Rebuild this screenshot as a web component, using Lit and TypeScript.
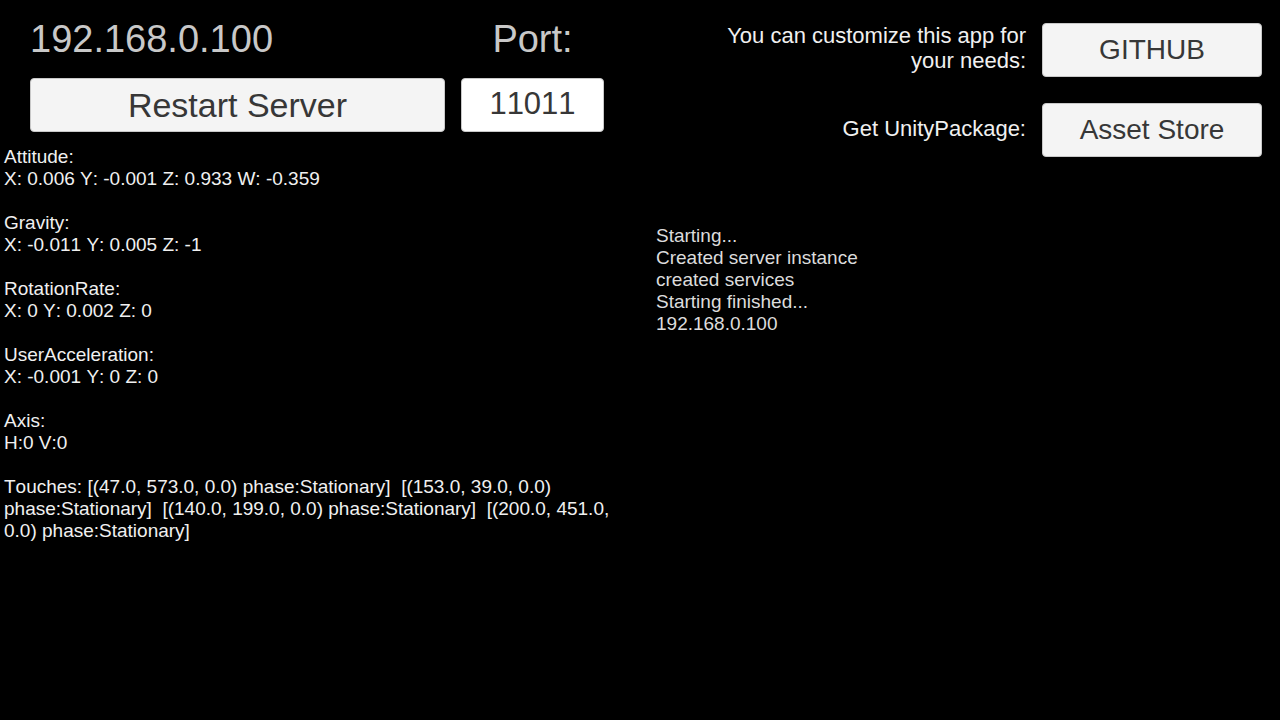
import { LitElement, html, css } from "lit";
import { customElement, state } from "lit/decorators.js";

interface Reading {
  name: string;
  value: string;
}

@customElement("app-root")
export class AppRoot extends LitElement {
  static styles = css`
    :host {
      display: block;
      min-height: 100vh;
      background: #000;
      color: #f0f0f0;
      font-family: "Liberation Sans", Arial, sans-serif;
      font-size: 19px;
      font-kerning: none;
      line-height: 22px;
    }
    * {
      box-sizing: border-box;
    }
    .page {
      display: grid;
      grid-template-columns: 1fr 1fr;
    }
    .server {
      display: grid;
      grid-template-columns: 415fr 143fr;
      column-gap: 16px;
      padding: 16px 36px 0 30px;
    }
    .heading {
      display: block;
      height: 62px;
      color: #c8c8c8;
      font-size: 38px;
      line-height: 46px;
    }
    .port-label {
      text-align: center;
    }
    button,
    input {
      width: 100%;
      height: 54px;
      margin: 0;
      padding: 0;
      border: 1px solid #c8c8c8;
      border-radius: 4px;
      background: #f4f4f4;
      color: #373737;
      font-family: inherit;
      font-kerning: inherit;
      text-align: center;
    }
    button {
      font-size: 28px;
      cursor: pointer;
    }
    .restart {
      font-size: 34px;
    }
    input {
      padding-bottom: 3px;
      background: #fff;
      font-size: 31px;
    }
    .readings {
      margin: 0;
      padding: 14px 16px 0 4px;
    }
    .reading {
      margin-bottom: 22px;
    }
    .value {
      margin: 0;
      white-space: pre-wrap;
    }
    .links {
      display: grid;
      grid-template-columns: 1fr 220px;
      column-gap: 16px;
      row-gap: 26px;
      align-items: center;
      padding: 23px 18px 0 80px;
    }
    .caption {
      padding-bottom: 4px;
      font-size: 22px;
      font-kerning: normal;
      line-height: 25px;
      text-align: right;
    }
    .log {
      padding: 68px 16px 0;
      color: #dcdcdc;
      white-space: pre-line;
    }
  `;

  @state() private port = "11011";

  private address = "192.168.0.100";

  private readings: Reading[] = [
    { name: "Attitude:", value: "X: 0.006 Y: -0.001 Z: 0.933 W: -0.359" },
    { name: "Gravity:", value: "X: -0.011 Y: 0.005 Z: -1" },
    { name: "RotationRate:", value: "X: 0 Y: 0.002 Z: 0" },
    { name: "UserAcceleration:", value: "X: -0.001 Y: 0 Z: 0" },
    { name: "Axis:", value: "H:0 V:0" },
  ];

  private touches = [
    "[(47.0, 573.0, 0.0) phase:Stationary]",
    "[(153.0, 39.0, 0.0) phase:Stationary]",
    "[(140.0, 199.0, 0.0) phase:Stationary]",
    "[(200.0, 451.0, 0.0) phase:Stationary]",
  ];

  private log = [
    "Starting...",
    "Created server instance",
    "created services",
    "Starting finished...",
    this.address,
  ];

  private onPort(e: Event) {
    this.port = (e.target as HTMLInputElement).value;
  }

  render() {
    return html`
      <main class="page">
        <section>
          <div class="server">
            <span class="heading">${this.address}</span>
            <label class="heading port-label" for="port">Port:</label>
            <button class="restart" type="button">Restart Server</button>
            <input id="port" type="text" inputmode="numeric" .value=${this.port} @input=${this.onPort} />
          </div>
          <div class="readings">
            ${this.readings.map(
              (r) => html`<div class="reading">
                <div>${r.name}</div>
                <div class="value">${r.value}</div>
              </div>`
            )}
            <p class="value">${"Touches: " + this.touches.join("  ")}</p>
          </div>
        </section>
        <section>
          <div class="links">
            <span class="caption" id="github-caption">You can customize this app for your needs:</span>
            <button type="button" aria-describedby="github-caption">GITHUB</button>
            <span class="caption" id="store-caption">Get UnityPackage:</span>
            <button type="button" aria-describedby="store-caption">Asset Store</button>
          </div>
          <div class="log">${this.log.join("\n")}</div>
        </section>
      </main>
    `;
  }
}
